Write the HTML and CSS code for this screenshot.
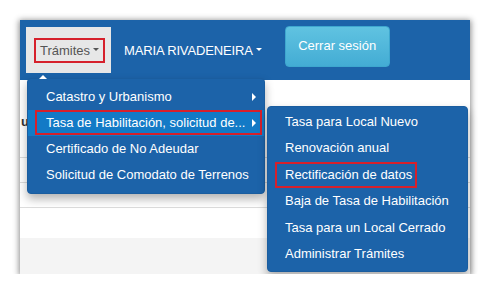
FILE: index.html
```html
<!DOCTYPE html>
<html lang="es">
<head>
<meta charset="utf-8">
<title>Trámites</title>
<link rel="stylesheet" href="styles.css">
</head>
<body>
<div class="stage">
  <div class="window">
    <nav class="navbar">
      <div class="nav-active">
        <span class="hl-nav">Trámites<span class="caret dark"></span></span>
      </div>
      <div class="nav-user">MARIA RIVADENEIRA<span class="caret light"></span></div>
      <button class="btn-logout">Cerrar sesión</button>
    </nav>
    <main class="content">
      <div class="row head">ur</div>
      <div class="row"></div>
      <div class="row"></div>
    </main>
    <footer class="footer"></footer>

    <ul class="dropdown">
      <li class="pointer"></li>
      <li class="item">Catastro y Urbanismo<span class="arrow"></span></li>
      <li class="item active"><span class="hl-row">Tasa de Habilitación, solicitud de...<span class="arrow"></span></span></li>
      <li class="item">Certificado de No Adeudar</li>
      <li class="item">Solicitud de Comodato de Terrenos</li>
    </ul>

    <ul class="submenu">
      <li class="sub">Tasa para Local Nuevo</li>
      <li class="sub">Renovación anual</li>
      <li class="sub mark"><span class="hl-sub">Rectificación de datos</span></li>
      <li class="sub">Baja de Tasa de Habilitación</li>
      <li class="sub">Tasa para un Local Cerrado</li>
      <li class="sub">Administrar Trámites</li>
    </ul>
  </div>
</div>
</body>
</html>
```
FILE: styles.css
```css
* { box-sizing: border-box; }
html, body { margin: 0; padding: 0; background: #fff; }
body { font-family: "Liberation Sans", Arial, sans-serif; font-size: 13px; }

.stage { padding: 20px 0 0 20px; }

.window {
  position: relative;
  width: 450px;
  height: 254px;
  background: #fff;
  box-shadow: 0 1px 6px 1px rgba(0, 0, 0, 0.45);
  display: flex;
  flex-direction: column;
}

.navbar {
  height: 60px;
  flex: none;
  background: #1c63a9;
  display: flex;
  align-items: center;
  padding: 0 6px;
}

.nav-active {
  height: 46px;
  width: 85px;
  background: #e7e7e7;
  display: flex;
  align-items: center;
  padding: 0 5px 0 8px;
}

.hl-nav {
  display: flex;
  align-items: center;
  height: 25px;
  border: 2px solid #d6202b;
  padding: 0 4px 0 4px;
  color: #555;
}

.caret {
  display: inline-block;
  width: 0;
  height: 0;
  border-left: 3px solid transparent;
  border-right: 3px solid transparent;
  border-top: 3px solid #555;
  margin-left: 3px;
  margin-top: -2px;
}
.caret.light { border-top-color: #fff; }

.nav-user {
  color: #fff;
  padding-left: 13px;
  display: flex;
  align-items: center;
  letter-spacing: -0.15px;
}

.btn-logout {
  margin-left: 23px;
  align-self: flex-start;
  margin-top: 6px;
  width: 105px;
  height: 41px;
  border: 1px solid #3ea7cf;
  border-radius: 4px;
  background: linear-gradient(#60c3e1, #43acd4);
  color: #fff;
  font-family: inherit;
  font-size: 13px;
  padding: 0 0 3px;
}

.content {
  flex: 1;
  padding-top: 32px;
}
.row {
  height: 25px;
  border-bottom: 1px solid #dcdcdc;
  color: #333;
  line-height: 20px;
  font-weight: bold;
}
.row.head { height: 46px; border-bottom: 1px solid #dcdcdc; padding-left: 1px; }

.footer {
  height: 36px;
  flex: none;
  background: #f4f4f4;
}

.dropdown, .submenu {
  position: absolute;
  margin: 0;
  list-style: none;
  background: #1c63a9;
  border: 1px solid #1a5d9f;
  border-radius: 4px;
  box-shadow: 0 5px 10px rgba(0, 0, 0, 0.3);
  color: #fff;
}

.dropdown {
  left: 7px;
  top: 58px;
  width: 238px;
  padding: 5px 0;
}

.pointer {
  position: absolute;
  left: 11px;
  top: -4px;
  width: 0;
  height: 0;
  border-left: 4px solid transparent;
  border-right: 4px solid transparent;
  border-bottom: 4px solid #fff;
}

.item {
  display: flex;
  justify-content: space-between;
  align-items: center;
  line-height: 20px;
  padding: 3px 8px 3px 18px;
}

.item.active {
  background: #137ac6;
  padding: 0 2px 1px 7px;
}

.hl-row {
  flex: 1;
  display: flex;
  justify-content: space-between;
  align-items: center;
  border: 2px solid #d6202b;
  line-height: 19px;
  padding: 1px 4px 1px 9px;
}

.arrow {
  width: 0;
  height: 0;
  border-top: 4px solid transparent;
  border-bottom: 4px solid transparent;
  border-left: 4px solid #fff;
}

.submenu {
  left: 247px;
  top: 86px;
  width: 201px;
  padding: 2px 0 4px;
}

.sub {
  line-height: 20.4px;
  padding: 3px 17px;
}

.sub.mark { padding: 0 0 0 7px; }

.hl-sub {
  display: inline-block;
  border: 2px solid #d6202b;
  line-height: 22.4px;
  padding: 0 3px 0 8px;
}
```
